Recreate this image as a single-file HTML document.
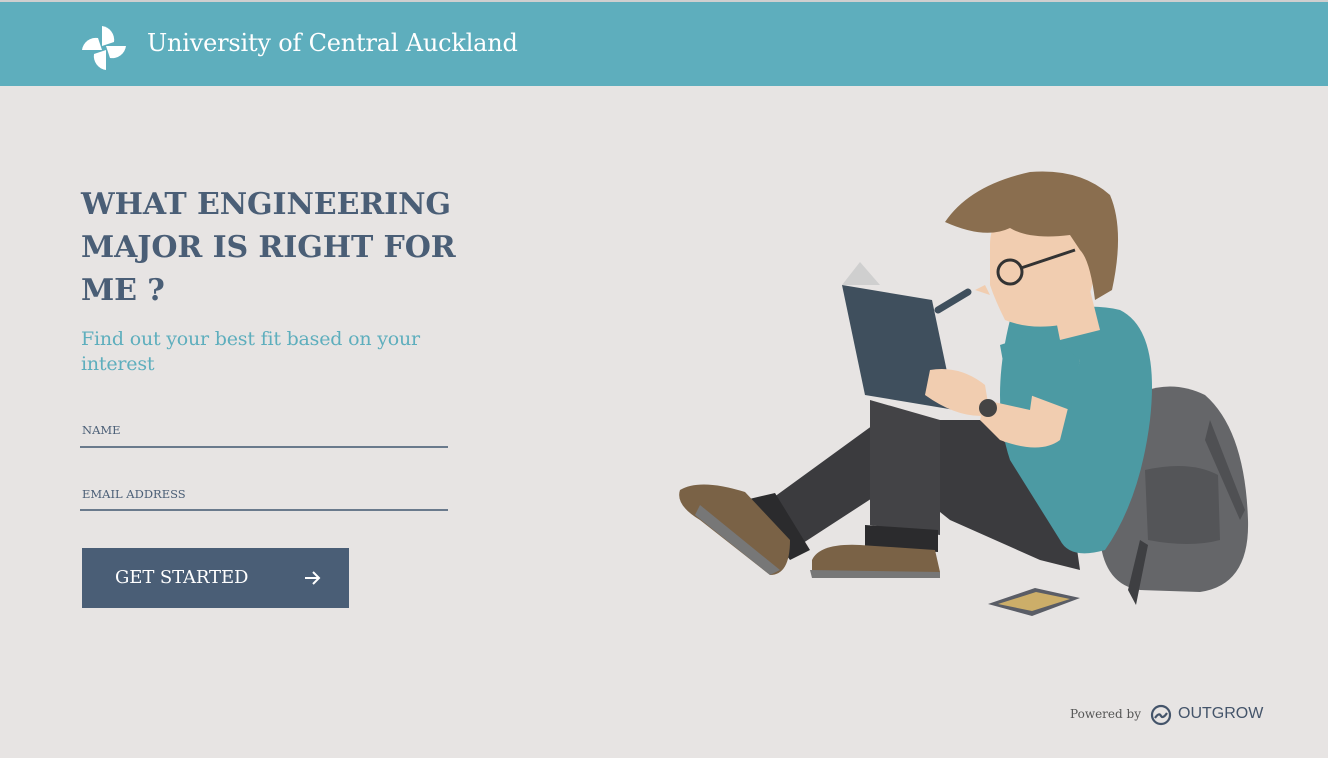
<!DOCTYPE html>
<html><head><meta charset="utf-8"><style>
*{margin:0;padding:0;box-sizing:border-box}
body{width:1328px;height:758px;background:#e7e4e3;position:relative;overflow:hidden;font-family:"DejaVu Serif","Liberation Serif",serif}
.top{position:absolute;left:0;top:0;width:1328px;height:2px;background:#cfcfcf}
.hdr{position:absolute;left:0;top:2px;width:1328px;height:84px;background:#5eaebd}
.brand{position:absolute;left:147px;top:27px;color:#fff;font-size:24px;letter-spacing:-0.2px}
h1{position:absolute;left:81px;top:183px;width:400px;font-size:30px;line-height:43px;color:#4a5e76;font-weight:bold;letter-spacing:-0.1px}
.sub{position:absolute;left:81px;top:327px;width:380px;font-size:19px;line-height:25px;color:#5eaebd;letter-spacing:-0.2px}
.lbl{position:absolute;left:82px;font-size:11.5px;color:#4a5e76;letter-spacing:0}
.line{position:absolute;left:80px;width:368px;height:2px;background:#6a7a8c}
.btn{position:absolute;left:82px;top:548px;width:267px;height:60px;background:#4a5e76;color:#fff;font-size:18px;letter-spacing:-0.1px}
.btn span{position:absolute;left:33px;top:19px}
.pw{position:absolute;left:1070px;top:707px;font-size:12px;color:#555}
.og{position:absolute;left:1178px;top:705px;font-family:"Liberation Sans",sans-serif;font-size:16px;color:#44546a;letter-spacing:0}
</style></head><body>
<div class="top"></div>
<div class="hdr">
<svg style="position:absolute;left:80px;top:22px" width="48" height="48" viewBox="-24 -24 48 48">
<g fill="#fff">
<path d="M-2 -2 L-2 -22 A14 14 0 0 1 10 -6 Z"/>
<path d="M-2 -2 L-2 -22 A14 14 0 0 1 10 -6 Z" transform="rotate(90)"/>
<path d="M-2 -2 L-2 -22 A14 14 0 0 1 10 -6 Z" transform="rotate(180)"/>
<path d="M-2 -2 L-2 -22 A14 14 0 0 1 10 -6 Z" transform="rotate(270)"/>
</g></svg>
<div class="brand">University of Central Auckland</div>
</div>
<h1>WHAT ENGINEERING MAJOR IS RIGHT FOR ME ?</h1>
<div class="sub">Find out your best fit based on your interest</div>
<div class="lbl" style="top:423px">NAME</div>
<div class="line" style="top:446px"></div>
<div class="lbl" style="top:487px">EMAIL ADDRESS</div>
<div class="line" style="top:509px"></div>
<div class="btn"><span>GET STARTED</span>
<svg style="position:absolute;left:221px;top:21px" width="18" height="18" viewBox="0 0 18 18"><path d="M2 9H16M10 3L16 9L10 15" stroke="#fff" stroke-width="2" fill="none"/></svg></div>

<svg style="position:absolute;left:670px;top:160px" width="600" height="470" viewBox="670 160 600 470">
<path d="M1135 395 Q1170 378 1205 395 Q1245 430 1248 520 Q1250 585 1200 592 L1140 590 Q1105 585 1100 540 Q1100 430 1135 395Z" fill="#656669"/>
<path d="M1145 470 Q1190 460 1218 475 L1220 540 Q1190 548 1148 540Z" fill="#545558"/>
<path d="M1210 420 L1245 510 L1240 520 L1205 440Z" fill="#4f5053"/>
<path d="M1128 590 L1140 540 L1148 545 L1136 605Z" fill="#3e3f42"/>
<path d="M988 604 L1035 588 L1080 598 L1032 616Z" fill="#5a5d66"/>
<path d="M998 604 L1036 592 L1070 599 L1032 611Z" fill="#e8c36a" opacity=".8"/>
<path d="M880 420 L770 500 L800 545 L900 480 L950 520 L1040 560 L1080 570 L1070 500 L980 420Z" fill="#3b3b3e"/>
<path d="M870 400 L940 420 L940 535 L870 525Z" fill="#434346"/>
<path d="M745 500 L775 493 L810 550 L790 560Z" fill="#2b2b2d"/>
<path d="M680 490 Q700 478 745 492 L790 540 Q790 575 770 575 L700 520 Q675 505 680 490Z" fill="#7a6246"/>
<path d="M695 515 L770 575 L780 570 L700 505Z" fill="#777"/>
<path d="M865 525 L938 530 L938 552 L865 548Z" fill="#2b2b2d"/>
<path d="M812 560 Q820 543 860 545 L935 550 L940 572 L812 575Z" fill="#7a6246"/>
<path d="M810 570 L940 572 L940 578 L812 578Z" fill="#777"/>
<path d="M1010 320 Q1080 300 1120 310 Q1160 330 1150 420 Q1140 500 1105 550 Q1070 560 1060 540 L1010 460 Q990 400 1010 320Z" fill="#4c9aa3"/>
<path d="M1040 340 L1080 360 L1060 440 Q1040 455 1000 440 L980 420 L985 400 L1030 410Z" fill="#f1cdb0"/>
<path d="M1000 345 L1045 330 L1080 360 L1070 410 L1030 395 L1010 400Z" fill="#4c9aa3"/>
<path d="M1050 290 L1090 290 L1100 330 L1060 340Z" fill="#f1cdb0"/>
<path d="M990 245 Q990 205 1040 205 Q1090 210 1095 260 Q1095 310 1060 325 Q1030 330 1005 320 Q995 300 990 285Z" fill="#f1cdb0"/>
<path d="M985 285 L975 290 L990 295Z" fill="#f1cdb0"/>
<path d="M945 222 Q970 185 1030 172 Q1080 168 1110 195 Q1125 230 1112 290 L1095 300 Q1090 260 1080 250 L1070 235 Q1030 240 1010 228 Q985 240 945 222Z" fill="#8a6e4f"/>
<circle cx="1010" cy="272" r="12" fill="none" stroke="#333" stroke-width="3"/>
<path d="M1021 268 L1075 250" stroke="#333" stroke-width="3"/>
<path d="M842 285 L932 300 L955 410 L865 395Z" fill="#3f4f5d"/>
<path d="M842 285 L860 262 L880 285Z" fill="#cfcfcf"/>
<path d="M938 310 L968 292" stroke="#3f4f5d" stroke-width="7" stroke-linecap="round"/>
<path d="M930 370 Q960 365 985 385 L990 415 Q960 420 925 395Z" fill="#f1cdb0"/>
<circle cx="988" cy="408" r="9" fill="#444"/>
</svg>

<div class="pw">Powered by</div>
<svg style="position:absolute;left:1150px;top:704px" width="22" height="22" viewBox="0 0 22 22"><circle cx="11" cy="11" r="9" fill="none" stroke="#44546a" stroke-width="2.2"/><path d="M5 14 Q9 8 11 12 Q13 15 17 9" fill="none" stroke="#44546a" stroke-width="2.2"/></svg>
<div class="og">OUTGROW</div>
</body></html>
